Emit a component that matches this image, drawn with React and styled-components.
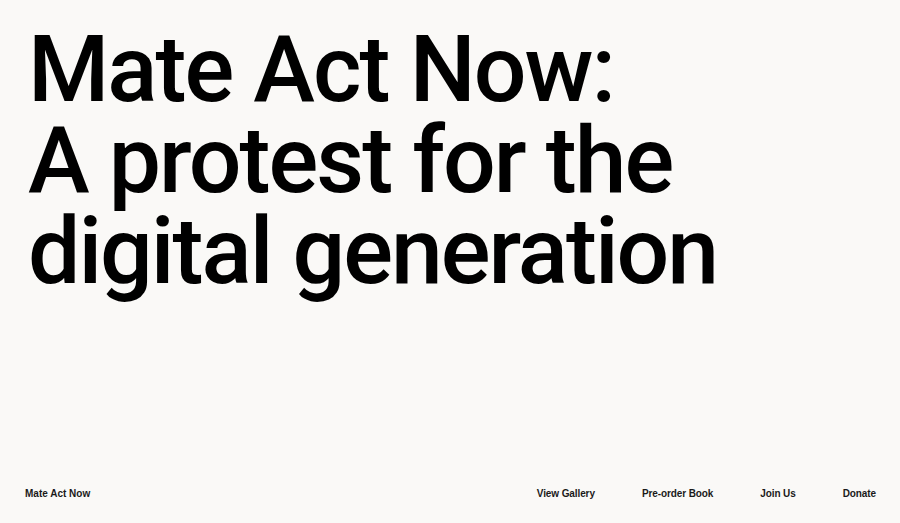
import React from "react";
import styled, { createGlobalStyle } from "styled-components";

const GlobalStyle = createGlobalStyle`
  html, body, #root {
    margin: 0;
    padding: 0;
    height: 100%;
  }
  body {
    background: #faf9f7;
    color: #0a0a0a;
    font-family: "Liberation Sans", Arial, sans-serif;
    -webkit-font-smoothing: antialiased;
  }
`;

const Page = styled.main`
  box-sizing: border-box;
  height: 100vh;
  display: flex;
  flex-direction: column;
  justify-content: space-between;
  padding: 24px 24px 23px 24px;
`;

const Headline = styled.h1`
  margin: 0;
  padding-left: 4px;
  font-family: Roboto, "Liberation Sans", Arial, sans-serif;
  font-weight: 500;
  font-size: 93px;
  line-height: 91px;
  letter-spacing: -2px;
  color: #000;
`;

const Line = styled.span`
  display: block;
  white-space: nowrap;
`;

const Footer = styled.footer`
  display: flex;
  align-items: center;
  justify-content: space-between;
  font-size: 10px;
  line-height: 12px;
  font-weight: 700;
  color: #1a1a1a;
`;

const Brand = styled.a`
  color: inherit;
  text-decoration: none;
  padding-left: 1px;
`;

const Nav = styled.nav`
  display: flex;
  gap: 47px;
`;

const NavLink = styled.a`
  color: inherit;
  text-decoration: none;
  white-space: nowrap;
  letter-spacing: -0.1px;
`;

const links = ["View Gallery", "Pre-order Book", "Join Us", "Donate"];

export default function App() {
  return (
    <>
      <GlobalStyle />
      <Page>
        <Headline>
          <Line>Mate Act Now:</Line>
          <Line>A protest for the</Line>
          <Line>digital generation</Line>
        </Headline>
        <Footer>
          <Brand href="#">Mate Act Now</Brand>
          <Nav>
            {links.map((l) => (
              <NavLink key={l} href="#">
                {l}
              </NavLink>
            ))}
          </Nav>
        </Footer>
      </Page>
    </>
  );
}
